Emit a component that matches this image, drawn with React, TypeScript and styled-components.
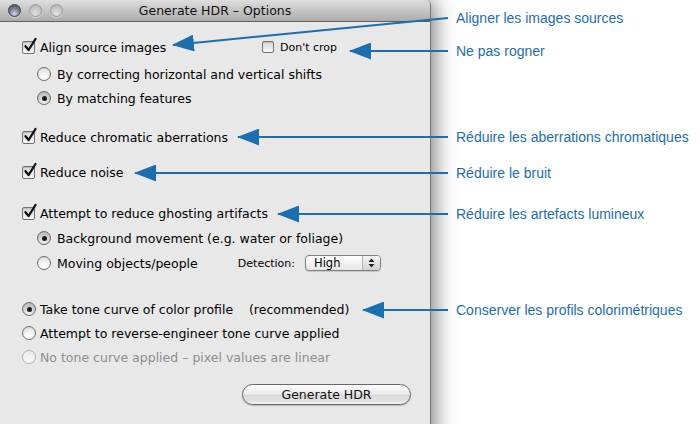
import React from "react";
import styled, { createGlobalStyle } from "styled-components";

const GlobalStyle = createGlobalStyle`
  html, body { margin: 0; padding: 0; background: #fff; }
  body { width: 700px; height: 424px; overflow: hidden; }
`;

const UI_FONT = `"DejaVu Sans", "Noto Sans", sans-serif`;
const BLUE = "#1d6db1";

const Page = styled.div`
  position: relative;
  width: 700px;
  height: 424px;
  display: flex;
  overflow: hidden;
  background: #fff;
`;

const Window = styled.div`
  flex: none;
  width: 430px;
  height: 470px;
  background: #e8e8e8;
  border-right: 1px solid #777;
  border-top-right-radius: 5px;
  box-shadow: 3px 0 22px rgba(0, 0, 0, 0.55);
  display: flex;
  flex-direction: column;
  font-family: ${UI_FONT};
  color: #000;
  position: relative;
  z-index: 0;
`;

const TitleBar = styled.div`
  flex: none;
  height: 21px;
  display: grid;
  grid-template-columns: 1fr auto 1fr;
  align-items: center;
  background: linear-gradient(#dedede, #acacac);
  border-bottom: 1px solid #5f5f5f;
  border-top-right-radius: 5px;
`;

const Lights = styled.div`
  display: flex;
  gap: 8px;
  padding-left: 8px;
`;

const Light = styled.span<{ $active?: boolean }>`
  width: 13px;
  height: 13px;
  border-radius: 50%;
  box-sizing: border-box;
  border: 1px solid ${(p) => (p.$active ? "#3a404b" : "#9c9c9c")};
  background: ${(p) =>
    p.$active
      ? "radial-gradient(circle at 50% 78%, #d4d9e2 0%, #7f8795 45%, #434955 100%)"
      : "radial-gradient(circle at 50% 75%, #e2e2e2 0%, #c6c6c6 55%, #a8a8a8 100%)"};
  box-shadow: 0 1px 0 rgba(255, 255, 255, 0.4);
`;

const Title = styled.div`
  font-size: 12.5px;
  color: #111;
  white-space: nowrap;
`;

const Body = styled.div`
  display: flex;
  flex-direction: column;
  padding: 16px 19px 0 22px;
`;

const Row = styled.div<{ $mt: number; $indent?: number; $pr?: number }>`
  display: flex;
  align-items: center;
  height: 18px;
  margin-top: ${(p) => p.$mt}px;
  padding-left: ${(p) => p.$indent ?? 0}px;
  padding-right: ${(p) => p.$pr ?? 0}px;
`;

const Spacer = styled.div`
  flex: 1;
`;

const Option = styled.label<{ $gap?: number; $disabled?: boolean; $small?: boolean }>`
  display: flex;
  align-items: center;
  gap: ${(p) => p.$gap ?? 5}px;
  font-size: ${(p) => (p.$small ? 11 : 12.5)}px;
  color: ${(p) => (p.$disabled ? "#8d8d8d" : "#000")};
  white-space: pre;
`;

const Box = styled.span<{ $size: number }>`
  position: relative;
  flex: none;
  width: ${(p) => p.$size}px;
  height: ${(p) => p.$size}px;
  box-sizing: border-box;
  border: 1px solid #737373;
  border-radius: 2px;
  background: linear-gradient(#d8d8d8, #f6f6f6);
  box-shadow: inset 0 1px 1px rgba(0, 0, 0, 0.15);
`;

const CheckMark = styled.svg`
  position: absolute;
  left: 1px;
  top: -4px;
  overflow: visible;
`;

const Radio = styled.span<{ $on?: boolean; $disabled?: boolean }>`
  flex: none;
  width: 14px;
  height: 14px;
  box-sizing: border-box;
  border-radius: 50%;
  border: 1px solid ${(p) => (p.$disabled ? "#b4b4b4" : "#6c6c6c")};
  background: ${(p) =>
    p.$disabled
      ? "linear-gradient(#ececec, #f6f6f6)"
      : p.$on
      ? "radial-gradient(circle at 50% 80%, #f4f4f4 0%, #c8c8c8 60%, #a8a8a8 100%)"
      : "radial-gradient(circle at 50% 80%, #ffffff 0%, #ececec 55%, #cfcfcf 100%)"};
  display: flex;
  align-items: center;
  justify-content: center;
  &::after {
    content: "";
    display: ${(p) => (p.$on ? "block" : "none")};
    width: 5px;
    height: 5px;
    border-radius: 50%;
    background: #1a1a1a;
  }
`;

const DetectLabel = styled.span`
  font-size: 11px;
  margin-right: 10px;
`;

const Select = styled.div`
  width: 76px;
  height: 16px;
  box-sizing: border-box;
  border: 1px solid #7e7e7e;
  border-radius: 4px;
  background: linear-gradient(#ffffff, #e6e6e6);
  display: flex;
  overflow: hidden;
  box-shadow: 0 1px 1px rgba(0, 0, 0, 0.15);
`;

const SelectValue = styled.span`
  flex: 1;
  padding-left: 8px;
  font-size: 11.5px;
  line-height: 14px;
`;

const Stepper = styled.span`
  width: 17px;
  border-left: 1px solid #b4b4b4;
  background: linear-gradient(#f6f6f6, #d2d2d2);
  display: flex;
  align-items: center;
  justify-content: center;
`;

const ButtonRow = styled.div`
  display: flex;
  justify-content: flex-end;
  margin-top: 18px;
`;

const Button = styled.button`
  width: 169px;
  height: 21px;
  box-sizing: border-box;
  border: 1px solid #676767;
  border-radius: 11px;
  background: linear-gradient(
    #fbfbfb 0%,
    #ececec 45%,
    #dadada 55%,
    #e2e2e2 85%,
    #f4f4f4 100%
  );
  font-family: ${UI_FONT};
  font-size: 12.5px;
  color: #111;
  padding: 0;
  box-shadow: 0 1px 1px rgba(0, 0, 0, 0.2);
`;

const Notes = styled.div`
  display: flex;
  flex-direction: column;
  padding-left: 25px;
  font-family: "Liberation Sans", Arial, sans-serif;
  font-size: 14px;
  color: ${BLUE};
  position: relative;
  z-index: 1;
`;

const Note = styled.div<{ $mt: number }>`
  margin-top: ${(p) => p.$mt}px;
  line-height: 16px;
  white-space: nowrap;
`;

const Overlay = styled.svg`
  position: absolute;
  left: 0;
  top: 0;
  pointer-events: none;
  z-index: 2;
`;

const CheckBox = ({ checked, size = 13 }: { checked?: boolean; size?: number }) => (
  <Box $size={size}>
    {checked && (
      <CheckMark width="13" height="14" viewBox="0 0 13 14">
        <path d="M1.5 8.2 L4.6 12 L11.5 1" fill="none" stroke="#111" strokeWidth="2.3" strokeLinecap="round" strokeLinejoin="round" />
      </CheckMark>
    )}
  </Box>
);

const arrows: { x1: number; y1: number; x2: number; y2: number }[] = [
  { x1: 448, y1: 18, x2: 173, y2: 45 },
  { x1: 448, y1: 51, x2: 350, y2: 51 },
  { x1: 448, y1: 137, x2: 238, y2: 137 },
  { x1: 448, y1: 173, x2: 135, y2: 173 },
  { x1: 448, y1: 214, x2: 278, y2: 214 },
  { x1: 448, y1: 310, x2: 363, y2: 310 },
];

export default function App() {
  return (
    <>
      <GlobalStyle />
      <Page>
        <Window>
          <TitleBar>
            <Lights>
              <Light $active />
              <Light />
              <Light />
            </Lights>
            <Title>Generate HDR – Options</Title>
            <div />
          </TitleBar>
          <Body>
            <Row $mt={0} $pr={74}>
              <Option>
                <CheckBox checked />
                Align source images
              </Option>
              <Spacer />
              <Option $small $gap={6}>
                <CheckBox size={12} />
                Don't crop
              </Option>
            </Row>
            <Row $mt={9} $indent={15}>
              <Option $gap={6}>
                <Radio />
                By correcting horizontal and vertical shifts
              </Option>
            </Row>
            <Row $mt={6} $indent={15}>
              <Option $gap={6}>
                <Radio $on />
                By matching features
              </Option>
            </Row>
            <Row $mt={21}>
              <Option>
                <CheckBox checked />
                Reduce chromatic aberrations
              </Option>
            </Row>
            <Row $mt={17}>
              <Option>
                <CheckBox checked />
                Reduce noise
              </Option>
            </Row>
            <Row $mt={23}>
              <Option>
                <CheckBox checked />
                Attempt to reduce ghosting artifacts
              </Option>
            </Row>
            <Row $mt={7} $indent={15}>
              <Option $gap={6}>
                <Radio $on />
                Background movement (e.g. water or foliage)
              </Option>
            </Row>
            <Row $mt={7} $indent={15} $pr={30}>
              <Option $gap={6}>
                <Radio />
                Moving objects/people
              </Option>
              <Spacer />
              <DetectLabel>Detection:</DetectLabel>
              <Select>
                <SelectValue>High</SelectValue>
                <Stepper>
                  <svg width="7" height="10" viewBox="0 0 7 10">
                    <path d="M3.5 0.5 L6.5 4 L0.5 4 Z" fill="#222" />
                    <path d="M3.5 9.5 L6.5 6 L0.5 6 Z" fill="#222" />
                  </svg>
                </Stepper>
              </Select>
            </Row>
            <Row $mt={28}>
              <Option $gap={4}>
                <Radio $on />
                {"Take tone curve of color profile    (recommended)"}
              </Option>
            </Row>
            <Row $mt={6}>
              <Option $gap={4}>
                <Radio />
                Attempt to reverse-engineer tone curve applied
              </Option>
            </Row>
            <Row $mt={6}>
              <Option $gap={4} $disabled>
                <Radio $disabled />
                No tone curve applied – pixel values are linear
              </Option>
            </Row>
            <ButtonRow>
              <Button>Generate HDR</Button>
            </ButtonRow>
          </Body>
        </Window>
        <Notes>
          <Note $mt={10}>Aligner les images sources</Note>
          <Note $mt={17}>Ne pas rogner</Note>
          <Note $mt={70}>Réduire les aberrations chromatiques</Note>
          <Note $mt={20}>Réduire le bruit</Note>
          <Note $mt={25}>Réduire les artefacts lumineux</Note>
          <Note $mt={80}>Conserver les profils colorimétriques</Note>
        </Notes>
        <Overlay width="700" height="424" viewBox="0 0 700 424">
          <defs>
            <marker
              id="head"
              markerUnits="userSpaceOnUse"
              markerWidth="22"
              markerHeight="17"
              viewBox="0 0 22 17"
              refX="21"
              refY="8.5"
              orient="auto"
            >
              <path d="M0 0 L22 8.5 L0 17 Z" fill={BLUE} />
            </marker>
          </defs>
          {arrows.map((a, i) => (
            <line
              key={i}
              x1={a.x1}
              y1={a.y1}
              x2={a.x2}
              y2={a.y2}
              stroke={BLUE}
              strokeWidth="2"
              markerEnd="url(#head)"
            />
          ))}
        </Overlay>
      </Page>
    </>
  );
}
